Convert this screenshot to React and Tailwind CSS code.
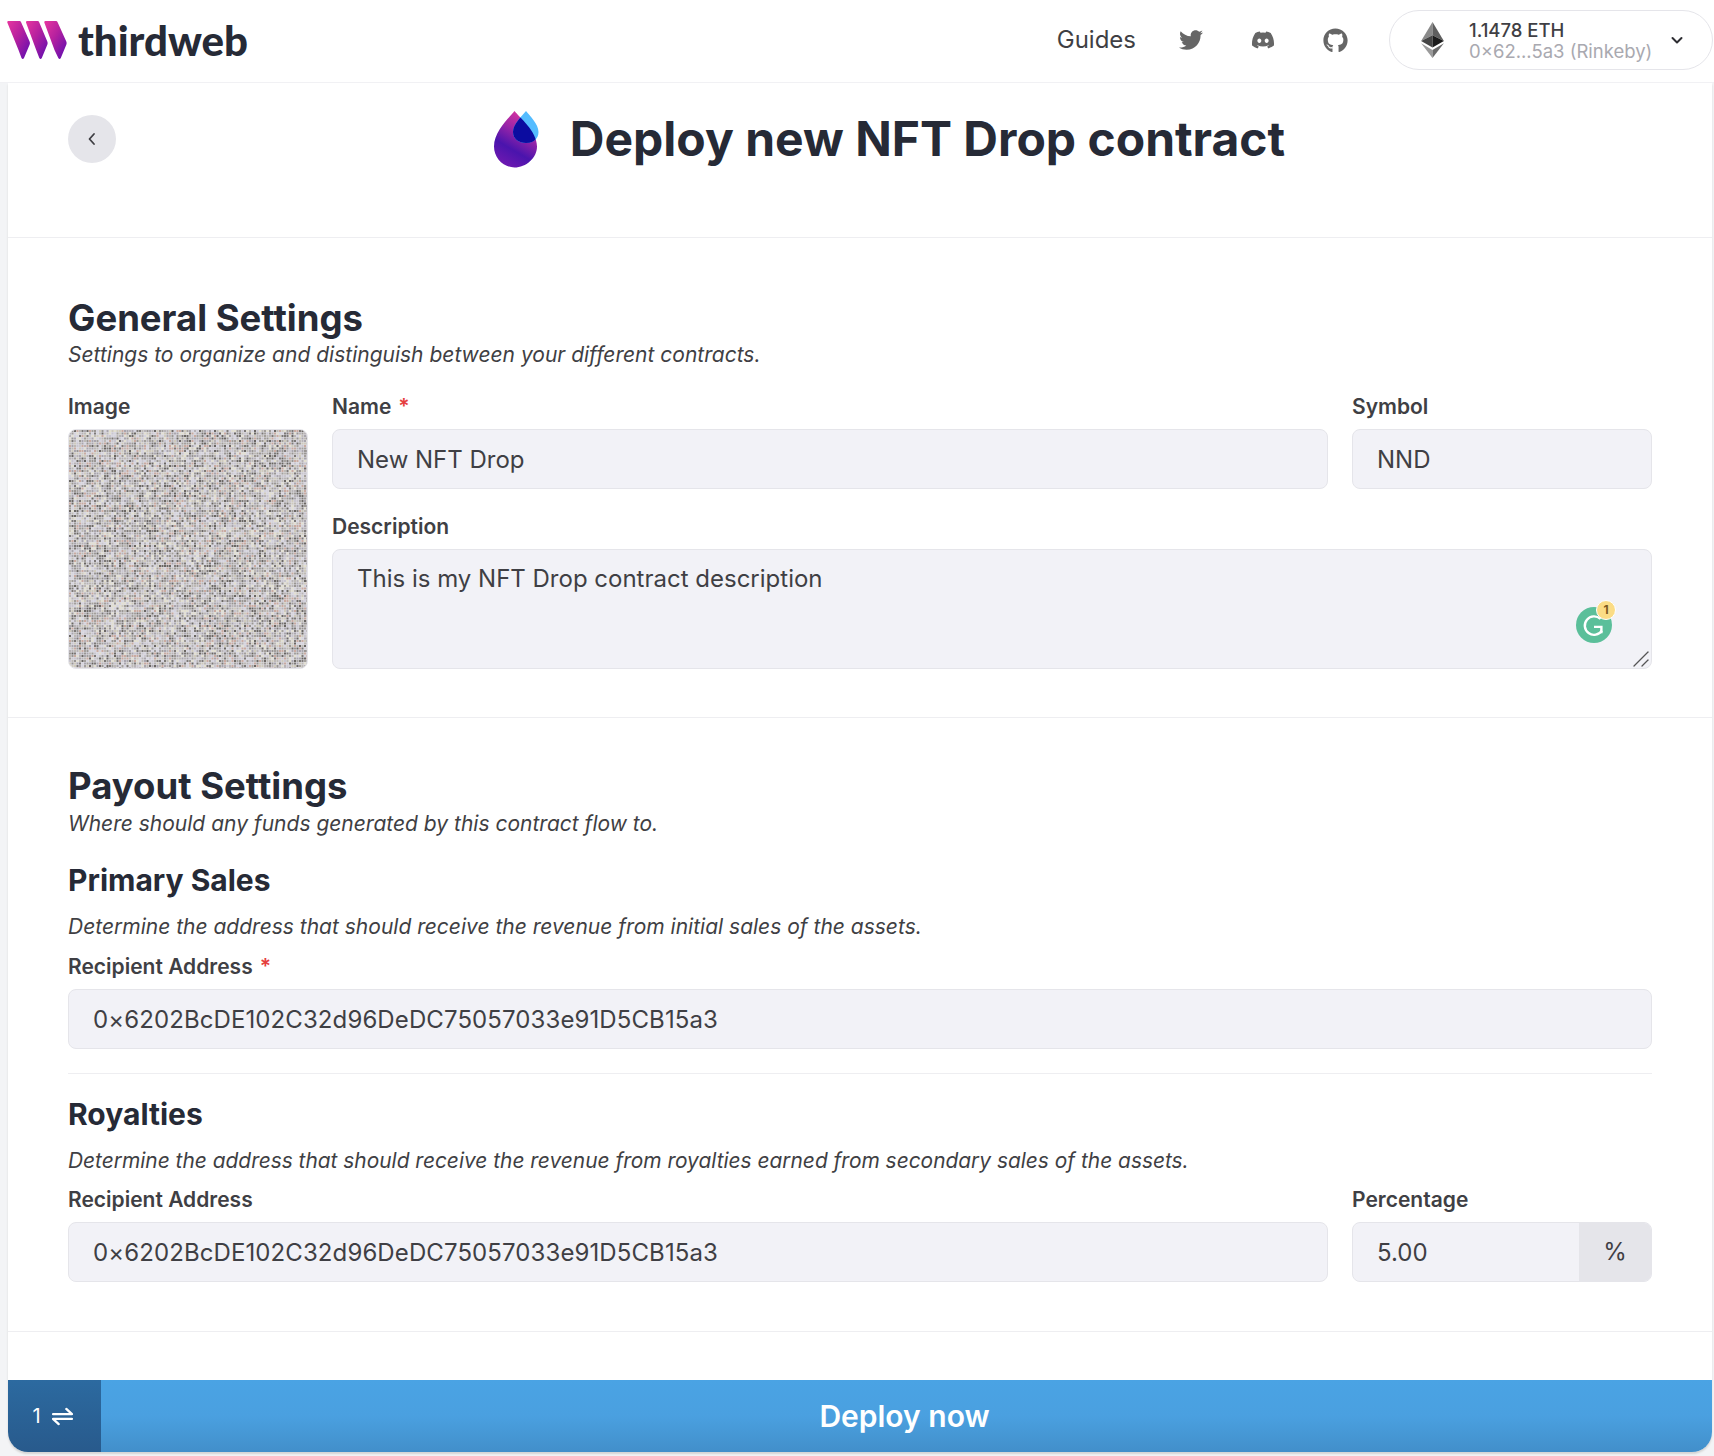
import React from "react";
import { FaTwitter, FaDiscord, FaGithub } from "react-icons/fa";

const inter = { fontFamily: "Inter, 'Liberation Sans', sans-serif" };

function Noise() {
  const cells = [];
  let s = 12345;
  const rnd = () => {
    s = (s * 1664525 + 1013904223) >>> 0;
    return s / 4294967296;
  };
  const palette = ["#9a9693", "#7d7977", "#c9c6cf", "#b8b3b6", "#e3dfcf", "#a9a5ad", "#6a6663", "#c9aaa0", "#d5d3de", "#a39f9b", "#bdb9b4", "#cfcabb"];
  for (let y = 0; y < 238; y += 2.5) {
    for (let x = 0; x < 238; x += 2.5) {
      cells.push(<rect key={x + "-" + y} x={x} y={y} width="2" height="2" fill={palette[Math.floor(rnd() * palette.length)]} />);
    }
  }
  return (
    <svg width="238" height="238" viewBox="0 0 238 238" className="block">
      <rect width="238" height="238" fill="#dfdee3" />
      {cells}
    </svg>
  );
}

function WLogo() {
  return (
    <svg width="62" height="40" viewBox="6 20 62 40" className="block">
      <defs>
        <linearGradient id="wg" x1="0" y1="0" x2="1" y2="1">
          <stop offset="0" stopColor="#e7369f" />
          <stop offset="0.45" stopColor="#b4209f" />
          <stop offset="1" stopColor="#5a0cb2" />
        </linearGradient>
      </defs>
      <path fill="url(#wg)" d="M7.300 22.500q-.5-1.500 1-1.500H19.500q1.200 0 1.600 1.200L29.600 41.500q.7 1.600 .1 3L24 58q-1.200 2-2.500 0L18.500 50Z" />
      <path fill="url(#wg)" d="M26 22.500q-.4-1.500 1-1.500H37.600q1.200 0 1.600 1.200L47.300 41.500q.7 1.600 .1 3L41.800 58q-1.200 2-2.500 0L36.200 50Z" />
      <path fill="url(#wg)" d="M44.300 22.500q-.4-1.500 1-1.500H56q1.200 0 1.600 1.200L66.300 41.500q.7 1.600 .1 3L60.800 58q-1.200 2-2.500 0L54.500 50Z" />
    </svg>
  );
}

function DropLogo() {
  const big = "M21.500 1C17 7 1 21 1 36.500C1 48 10.500 57.500 21.500 57.500C33 57.500 44 48 44 36.500C44 21 26 7 21.500 1Z";
  const small = "M33 1C29 6 20 14 20 22C20 29 26 33 33 33C40 33 45.500 29 45.500 22C45.500 14 37 6 33 1Z";
  return (
    <svg width="46" height="58" viewBox="0 0 46 58" className="block shrink-0">
      <defs>
        <linearGradient id="dg" x1="0.7" y1="0.05" x2="0.3" y2="0.95">
          <stop offset="0" stopColor="#d9349f" />
          <stop offset="0.35" stopColor="#9a25a8" />
          <stop offset="0.7" stopColor="#4a14ad" />
          <stop offset="1" stopColor="#6a18b0" />
        </linearGradient>
        <clipPath id="dc"><path d={big} /></clipPath>
      </defs>
      <path d={big} fill="url(#dg)" />
      <path d={small} fill="#54bcff" />
      <path d={small} fill="#0b0ca0" clipPath="url(#dc)" />
    </svg>
  );
}

function EthIcon() {
  return (
    <svg width="23" height="36" viewBox="0 0 24 38" className="block shrink-0">
      <path d="M12 0L0 20L12 14Z" fill="#8a8a8a" />
      <path d="M12 0L24 20L12 14Z" fill="#5f5f5f" />
      <path d="M12 14L0 20L12 27Z" fill="#454545" />
      <path d="M12 14L24 20L12 27Z" fill="#1c1c1c" />
      <path d="M0 22.500L12 38V29.500Z" fill="#9a9a9a" />
      <path d="M24 22.500L12 38V29.500Z" fill="#6a6a6a" />
    </svg>
  );
}

function Label({ children, required, className = "" }) {
  return (
    <div className={"text-[21px] leading-[26px] font-semibold text-[#3f3f44] " + className}>
      {children}
      {required && <span className="text-[#e53e3e] ml-[7px]">*</span>}
    </div>
  );
}

function Field({ value, className = "" }) {
  return (
    <input
      readOnly
      value={value}
      style={inter}
      className={"block w-full h-[60px] px-[24px] bg-[#f2f2f7] border border-[#e5e5ea] rounded-[8px] text-[24px] text-[#3f3f44] outline-none " + className}
    />
  );
}

export default function App() {
  return (
    <div style={inter} className="min-h-[1456px] w-[1714px] bg-[#f3f4f6] overflow-hidden">
      <header className="h-[83px] pb-[2px] bg-white border-b border-[#f1f1f4] flex items-center">
        <div className="ml-[6px]"><WLogo /></div>
        <span className="ml-[10px] text-[42px] leading-[40px] font-black text-[#262a36]" style={{ fontFamily: "Lato, sans-serif" }}>thirdweb</span>
        <div className="ml-auto flex items-center">
          <span className="text-[24px] text-[#3f3f44]">Guides</span>
          <FaTwitter className="ml-[43px] text-[#666666]" size={24} />
          <FaDiscord className="ml-[48px] text-[#666666]" size={24} />
          <FaGithub className="ml-[48px] text-[#666666]" size={25} />
          <div className="ml-[41px] mr-px h-[60px] w-[324px] rounded-full border border-[#e5e5ea] bg-white flex items-center pl-[31px]">
            <EthIcon />
            <div className="ml-[25px] pt-px flex flex-col">
              <span className="text-[18.5px] leading-[21px] font-medium text-[#3f3f44]">1.1478 ETH</span>
              <span className="text-[18.5px] leading-[21px] text-[#a9a9b0]">0×62...5a3 (Rinkeby)</span>
            </div>
            <svg width="14" height="14" viewBox="0 0 14 14" className="ml-[18px]" fill="none" stroke="#2d2d32" strokeWidth="2" strokeLinecap="round" strokeLinejoin="round"><path d="M2.500 5l4.500 4.500L11.500 5" /></svg>
          </div>
        </div>
      </header>

      <main className="ml-[8px] w-[1704px] h-[1369px] bg-white rounded-b-[20px] shadow-[0_2px_2px_#d4d4d4] flex flex-col overflow-hidden">
        <section className="h-[155px] border-b border-[#eeeef1] px-[60px] pt-[32px] flex items-start">
          <div className="w-[48px] h-[48px] rounded-full bg-[#e5e5ea] flex items-center justify-center shrink-0">
            <svg width="12" height="14" viewBox="0 0 12 14" fill="none" stroke="#3f3f44" strokeWidth="1.800" strokeLinecap="round" strokeLinejoin="round"><path d="M8 2L3.500 7L8 12" /></svg>
          </div>
          <div className="flex-1 pl-[10px] flex items-center justify-center gap-[31px] h-[48px]">
            <DropLogo />
            <h1 className="text-[48px] leading-[60px] font-bold text-[#262a36] whitespace-nowrap">Deploy new NFT Drop contract</h1>
          </div>
        </section>

        <section className="h-[480px] border-b border-[#eeeef1] px-[60px] pt-[58px]">
          <h2 className="text-[36.5px] leading-[44px] font-bold text-[#262a36]">General Settings</h2>
          <p className="text-[21px] leading-[26px] italic text-[#3f3f44] mt-[2px]">Settings to organize and distinguish between your different contracts.</p>
          <div className="flex gap-[24px] mt-[26px]">
            <div className="w-[240px] shrink-0">
              <Label>Image</Label>
              <div className="mt-[9px] w-[240px] h-[240px] rounded-[8px] border border-[#e5e5ea] overflow-hidden"><Noise /></div>
            </div>
            <div className="flex-1 flex flex-col">
              <div className="flex gap-[24px]">
                <div className="flex-1">
                  <Label required>Name</Label>
                  <Field value="New NFT Drop" className="mt-[9px]" />
                </div>
                <div className="w-[300px]">
                  <Label>Symbol</Label>
                  <Field value="NND" className="mt-[9px]" />
                </div>
              </div>
              <Label className="mt-[25px]">Description</Label>
              <div className="relative mt-[9px]">
                <textarea readOnly style={inter} value="This is my NFT Drop contract description" className="block w-full h-[120px] px-[24px] pt-[13px] bg-[#f2f2f7] border border-[#e5e5ea] rounded-[8px] text-[24px] leading-[32px] text-[#3f3f44] outline-none resize-none" />
                <div className="absolute left-[1244px] top-[58px] w-[36px] h-[36px] rounded-full bg-[#5bbf9a] flex items-center justify-center">
                  <svg width="24" height="24" viewBox="0 0 26 26" fill="none" stroke="white" strokeWidth="2.600"><path d="M20 6.500A10 10 0 1 0 21.500 19" /><path d="M13 15H21V22" strokeLinejoin="miter" /></svg>
                </div>
                <div className="absolute left-[1264px] top-[51px] w-[20px] h-[20px] rounded-full bg-[#fbdc85] border border-white flex items-center justify-center text-[12px] leading-none font-bold text-[#7c5a20]">1</div>
                <svg width="16" height="16" viewBox="0 0 16 16" className="absolute left-[1301px] top-[102px]" fill="none" stroke="#555555" strokeWidth="1.300" strokeLinecap="round"><path d="M1 15L15 1" /><path d="M9 15L15 9" /></svg>
              </div>
            </div>
          </div>
        </section>

        <section className="h-[614px] border-b border-[#eeeef1] px-[60px] pt-[46px]">
          <h2 className="text-[36.5px] leading-[44px] font-bold text-[#262a36]">Payout Settings</h2>
          <p className="text-[21px] leading-[26px] italic text-[#3f3f44] mt-[3px]">Where should any funds generated by this contract flow to.</p>
          <h3 className="text-[30px] leading-[36px] font-bold text-[#262a36] mt-[25px]">Primary Sales</h3>
          <p className="text-[21px] leading-[26px] italic text-[#3f3f44] mt-[16px]">Determine the address that should receive the revenue from initial sales of the assets.</p>
          <Label required className="mt-[14px]">Recipient Address</Label>
          <Field value="0×6202BcDE102C32d96DeDC75057033e91D5CB15a3" className="mt-[9px] tracking-[0.1px]" />
          <div className="border-t border-[#eeeef1] mt-[24px]" />
          <h3 className="text-[30px] leading-[36px] font-bold text-[#262a36] mt-[22px]">Royalties</h3>
          <p className="text-[20.9px] leading-[26px] italic text-[#3f3f44] mt-[16px]">Determine the address that should receive the revenue from royalties earned from secondary sales of the assets.</p>
          <div className="flex gap-[24px] mt-[13px]">
            <div className="flex-1">
              <Label>Recipient Address</Label>
              <Field value="0×6202BcDE102C32d96DeDC75057033e91D5CB15a3" className="mt-[9px] tracking-[0.1px]" />
            </div>
            <div className="w-[300px]">
              <Label>Percentage</Label>
              <div className="mt-[9px] flex h-[60px] rounded-[8px] border border-[#e5e5ea] overflow-hidden bg-[#f2f2f7]">
                <input readOnly value="5.00" style={inter} className="min-w-0 flex-1 px-[24px] pt-[2px] bg-transparent text-[24px] text-[#3f3f44] outline-none" />
                <div className="w-[72px] bg-[#e5e5ea] flex items-center justify-center text-[24px] text-[#3f3f44]">%</div>
              </div>
            </div>
          </div>
        </section>

        <div className="mt-[48px] h-[72px] flex">
          <div className="w-[93px] pr-[4px] bg-gradient-to-b from-[#2c6aa0] to-[#285a8c] flex items-center justify-center gap-[11px] text-white text-[20px]">
            <span>1</span>
            <svg width="21" height="19" viewBox="0 0 22 20" fill="none" stroke="white" strokeWidth="2.400" strokeLinecap="round" strokeLinejoin="round"><path d="M1 7.500H21L15 2" /><path d="M21 12.500H1L7 18" /></svg>
          </div>
          <div className="flex-1 pr-[4px] pt-[1px] bg-gradient-to-b from-[#4aa3e4] via-[#4aa0e0] to-[#428fca] flex items-center justify-center text-white text-[30px] font-semibold">Deploy now</div>
        </div>
      </main>
    </div>
  );
}
